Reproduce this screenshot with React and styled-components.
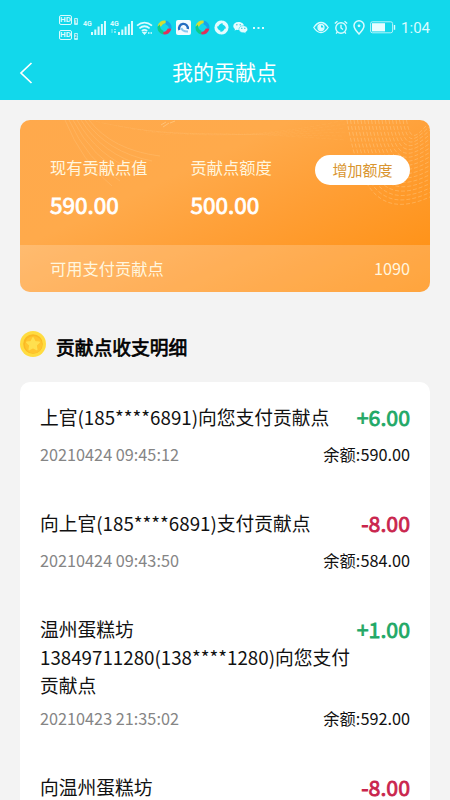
import React from "react";
import styled, { createGlobalStyle } from "styled-components";

const records = [
  {
    id: 1,
    title: "上官(185****6891)向您支付贡献点",
    amount: "+6.00",
    time: "20210424 09:45:12",
    balance: "590.00",
  },
  {
    id: 2,
    title: "向上官(185****6891)支付贡献点",
    amount: "-8.00",
    time: "20210424 09:43:50",
    balance: "584.00",
  },
  {
    id: 3,
    title: "温州蛋糕坊13849711280(138****1280)向您支付贡献点",
    amount: "+1.00",
    time: "20210423 21:35:02",
    balance: "592.00",
  },
  {
    id: 4,
    title: "向温州蛋糕坊",
    amount: "-8.00",
  },
];

const swirlColors = ["#d3de35", "#16a5ea", "#e0305a", "#0ccb8b"];
const plainColors = ["#e4fcff", "#e4fcff", "#e4fcff", "#e4fcff"];

const Signal = ({ sub }) => (
  <svg width="28" height="18" viewBox="0 0 28 18" fill="#d9fbff">
    <text x="0" y="7" fontSize="7" fontWeight="700">
      4G
    </text>
    {sub && <path d="M1.500 10h1v4h-1zM4 10h2v1H4zM4 12h2v2H4z" opacity=".6" />}
    <path d="M8 13h2v3H8zM11.300 10.500h2V16h-2zM14.600 7.500h2V16h-2zM17.900 5h2v11h-2zM21 2h2v14h-2z" />
  </svg>
);

const Wifi = () => (
  <svg width="17" height="14" viewBox="0 0 17 14" fill="none" stroke="#d9fbff">
    <path d="M1 4.600Q8.500-1.500 16 4.600M3.400 7.300Q8.500 3.200 13.600 7.300M5.800 9.900Q8.500 7.800 11.200 9.900" strokeWidth="1.700" />
    <path d="M7 11.300h3l-1.500 1.700zM12 12h1.500M14.500 12H16" strokeWidth="1.300" />
  </svg>
);

const Swirl = ({ colors }) => (
  <svg width="15" height="15" viewBox="0 0 15 15">
    {colors.map((color, i) => (
      <path
        key={i}
        d="M.6 6.200A7 7 0 0 1 8.300.5L10.400 3Q5.800 2.600 4.200 6.500z"
        fill={color}
        transform={`rotate(${i * 90} 7.500 7.500)`}
      />
    ))}
  </svg>
);

const Browser = () => (
  <svg width="15" height="15" viewBox="0 0 15 15">
    <rect width="15" height="15" rx="2" fill="#f5fbff" />
    <path d="M3.400 10A4.400 4.400 0 1 1 11.800 9" fill="none" stroke="#246dc1" strokeWidth="2.400" />
    <path d="M5.500 7.800Q6 11.600 12 11.400" fill="none" stroke="#8bc7ef" strokeWidth="2" />
  </svg>
);

const Wechat = () => (
  <svg width="15" height="13" viewBox="0 0 15 13">
    <path d="M5.500 1C2.300 1 .3 2.800.3 5c0 1.300.7 2.300 1.700 3l-.4 1.600 2-.9c3.800.8 7.300-.9 7.300-3.700C10.900 2.600 8.500 1 5.500 1z" fill="#e4fcff" />
    <path d="M10.300 4.700c-2.600 0-4.400 1.600-4.400 3.600 0 2.200 2.300 3.800 5.200 3.400l1.900.9-.4-1.400c1.300-.7 2.100-1.700 2.100-2.900 0-2-1.900-3.600-4.400-3.600z" fill="#e4fcff" stroke="#12d5ea" strokeWidth=".5" />
    <path d="M3.600 3.800h.5M7 3.800h.5M8.600 7.300h.4M11.600 7.300h.4" stroke="#12b8cc" strokeLinecap="round" />
  </svg>
);

const Eye = () => (
  <svg width="16" height="13" viewBox="0 0 16 13" fill="none" stroke="#d9fbff" strokeWidth="1.300">
    <path d="M.8 6.500Q4 1.500 8 1.500t7.200 5Q12 11.500 8 11.500T.8 6.500z" />
    <circle cx="8" cy="6.500" r="3" />
    <path d="M8 3.800v2.700h2.700A2.700 2.700 0 1 1 8 3.800z" fill="#d9fbff" stroke="none" />
  </svg>
);

const Alarm = () => (
  <svg width="14" height="15" viewBox="0 0 14 15" fill="none" stroke="#d9fbff" strokeWidth="1.400">
    <circle cx="7" cy="8" r="5.200" />
    <path d="M7 4.800V8l2 1.500M.8 3.500 3.500 1.200M13.200 3.500l-2.700-2.300M3.200 12l-1 1.600M10.800 12l1 1.600" />
  </svg>
);

const Pin = () => (
  <svg width="12" height="15" viewBox="0 0 12 15" fill="none" stroke="#d9fbff" strokeWidth="1.500">
    <path d="M6 14Q1 8.800 1 5.800a5 5 0 0 1 10 0Q11 8.800 6 14z" />
    <circle cx="6" cy="5.800" r="1.400" fill="#d9fbff" stroke="none" />
  </svg>
);

const Battery = () => (
  <svg width="26" height="13" viewBox="0 0 26 13">
    <rect x=".6" y=".8" width="22" height="11" rx="1.800" fill="none" stroke="#b5f5fb" />
    <rect x="2" y="2.200" width="13" height="8.200" fill="#e8fdff" />
    <path d="M24.500 4v4.800" stroke="#d9fbff" strokeWidth="1.400" />
  </svg>
);

const Coin = () => (
  <svg width="26" height="26" viewBox="0 0 26 26">
    <circle cx="13" cy="13" r="13" fill="#ffdc40" />
    <circle cx="13" cy="13" r="9.800" fill="#fab924" />
    <circle cx="13.500" cy="13.700" r="8.600" fill="#ffc52e" />
    <path
      d="m13 6.800 1.900 3.900 4.300.6-3.100 3 .7 4.300-3.800-2-3.800 2 .7-4.300-3.100-3 4.300-.6z"
      fill="#ffe04f"
      stroke="#ffe04f"
      strokeWidth="1.500"
      strokeLinejoin="round"
    />
  </svg>
);

const Waves = () => (
  <WaveLines viewBox="0 0 410 125" fill="none" stroke="#ffe0ae">
    {Array.from({ length: 7 }, (_, i) => (
      <path
        key={`l${i}`}
        d={`M${45 + i * 4} 0Q${62 + i * 5} ${42 - i * 2} ${92 + i * 8} ${66 - i * 5}`}
        strokeWidth=".7"
        opacity=".28"
      />
    ))}
    {Array.from({ length: 6 }, (_, i) => (
      <path
        key={`t${i}`}
        d={`M${70 + i * 14} ${i * 3}Q190 ${30 - i * 4} 325 ${i * 4}`}
        strokeWidth=".6"
        strokeDasharray="4 2"
        opacity=".12"
      />
    ))}
    {Array.from({ length: 18 }, (_, i) => (
      <path
        key={`r${i}`}
        d={`M${327 + i * 3.500} 0C${340 + i * 3} ${78 - i * 3} ${365 + i * 2} ${98 - i * 5} 412 ${76 - i * 4.500}`}
        strokeWidth=".8"
        strokeDasharray="4 2"
        opacity=".4"
      />
    ))}
    <path d="M141 5l5-3M143 7l6-4M150 3l5-2" opacity=".45" />
  </WaveLines>
);

export default function App() {
  return (
    <Page>
      <GlobalStyle />
      <Top>
        <StatusBar>
          <StatusLeft>
            <HdGroup>
              {[1, 2].map((n) => (
                <HdLine key={n}>
                  <HdBadge>HD</HdBadge>
                  <SimBadge>{n}</SimBadge>
                </HdLine>
              ))}
            </HdGroup>
            <Signals>
              <Signal />
              <Signal sub />
            </Signals>
            <StatusIcons $gap={4}>
              <Wifi />
              <Swirl colors={swirlColors} />
              <Browser />
              <Swirl colors={swirlColors} />
              <Swirl colors={plainColors} />
              <Wechat />
              <svg width="13" height="4" viewBox="0 0 13 4" fill="#d9fbff">
                <path d="M1 1h2v2H1zM5.500 1h2v2h-2zM10 1h2v2h-2z" />
              </svg>
            </StatusIcons>
          </StatusLeft>
          <StatusIcons $gap={5}>
            <Eye />
            <Alarm />
            <Pin />
            <Battery />
            <Clock>1:04</Clock>
          </StatusIcons>
        </StatusBar>
        <NavBar>
          <BackButton aria-label="返回">
            <svg width="14" height="22" viewBox="0 0 14 22" fill="none" stroke="#fff" strokeWidth="1.700">
              <path d="M12.500 1 2 11l10.500 10" />
            </svg>
          </BackButton>
          <NavTitle>我的贡献点</NavTitle>
        </NavBar>
      </Top>

      <PointsCard>
        <Waves />
        <PointsMain>
          <Stat>
            <StatLabel>现有贡献点值</StatLabel>
            <StatValue>590.00</StatValue>
          </Stat>
          <Stat>
            <StatLabel>贡献点额度</StatLabel>
            <StatValue>500.00</StatValue>
          </Stat>
          <AddButton>增加额度</AddButton>
        </PointsMain>
        <PointsFooter>
          <span>可用支付贡献点</span>
          <span>1090</span>
        </PointsFooter>
      </PointsCard>

      <SectionHeader>
        <Coin />
        <SectionTitle>贡献点收支明细</SectionTitle>
      </SectionHeader>

      <RecordList>
        {records.map((item) => (
          <Record key={item.id}>
            <RecordHead>
              <RecordTitle>{item.title}</RecordTitle>
              <Amount $income={item.amount.startsWith("+")}>{item.amount}</Amount>
            </RecordHead>
            {item.time && (
              <RecordFoot>
                <Time>{item.time}</Time>
                <span>余额:{item.balance}</span>
              </RecordFoot>
            )}
          </Record>
        ))}
      </RecordList>
    </Page>
  );
}

const GlobalStyle = createGlobalStyle`
  * {
    box-sizing: border-box;
  }

  body {
    margin: 0;
    background: #f3f3f3;
    font-family: "Noto Sans CJK SC", sans-serif;
  }
`;

const Page = styled.div`
  display: flex;
  flex-direction: column;
  width: 100%;
  height: 800px;
  overflow: hidden;
  background: #f3f3f3;
`;

const Top = styled.header`
  flex: none;
  height: 100px;
  background: #12d8eb;
  color: #fff;
`;

const StatusBar = styled.div`
  display: flex;
  justify-content: space-between;
  align-items: center;
  height: 45px;
  padding: 10px 20px 0 59px;
`;

const StatusLeft = styled.div`
  display: flex;
  align-items: center;
`;

const HdGroup = styled.div`
  display: flex;
  flex-direction: column;
  gap: 5px;
  width: 24px;
`;

const HdLine = styled.div`
  display: flex;
  align-items: flex-end;
  gap: 2px;
`;

const HdBadge = styled.span`
  width: 13px;
  height: 10px;
  border: 1px solid #d9fbff;
  border-radius: 2px;
  font: 700 8px/8px Roboto, sans-serif;
  text-align: center;
  color: #d9fbff;
`;

const SimBadge = styled.span`
  width: 4px;
  height: 7px;
  border-radius: 1px;
  background: #b9f6fc;
  font: 700 5px/7px Roboto, sans-serif;
  text-align: center;
  color: #12b8cc;
`;

const Signals = styled.div`
  display: flex;
  width: 53px;
  font-family: Roboto, sans-serif;

  svg {
    flex: none;
    margin-right: -1px;
  }
`;

const StatusIcons = styled.div`
  display: flex;
  align-items: center;
  gap: ${({ $gap }) => $gap}px;
`;

const Clock = styled.span`
  font: 400 15px/18px Roboto, sans-serif;
  color: #d9fbff;
`;

const NavBar = styled.div`
  display: grid;
  grid-template-columns: 54px 1fr 54px;
  align-items: center;
  height: 55px;
`;

const BackButton = styled.button`
  display: flex;
  padding: 0 0 0 19px;
  border: 0;
  background: none;
`;

const NavTitle = styled.h1`
  margin: 0 1px 3px 0;
  font-size: 21px;
  font-weight: 400;
  line-height: 30px;
  text-align: center;
`;

const PointsCard = styled.section`
  position: relative;
  display: flex;
  flex: none;
  flex-direction: column;
  height: 172px;
  margin: 20px 20px 0;
  border-radius: 10px;
  overflow: hidden;
  background: linear-gradient(155deg, #ffa94c 0%, #ffaa4b 35%, #ff9e34 60%, #ff8e0d 100%);
  color: #fff;
`;

const WaveLines = styled.svg`
  position: absolute;
  top: 0;
  left: 0;
  width: 410px;
  height: 125px;
`;

const PointsMain = styled.div`
  position: relative;
  display: flex;
  height: 125px;
  padding: 35px 20px 0 30px;
`;

const Stat = styled.div`
  flex: none;

  & + & {
    margin-left: 43px;
  }
`;

const StatLabel = styled.div`
  font-size: 16.25px;
  line-height: 24px;
  color: #fff6df;
`;

const StatValue = styled.div`
  margin-top: 9px;
  font-size: 22.5px;
  line-height: 32px;
  -webkit-text-stroke: 0.8px currentColor;
`;

const AddButton = styled.button`
  flex: none;
  width: 95px;
  height: 30px;
  margin-left: auto;
  padding: 0;
  border: 0;
  border-radius: 15px;
  background: #fff;
  font-family: inherit;
  font-size: 15px;
  line-height: 30px;
  color: #d9952f;
`;

const PointsFooter = styled.div`
  position: relative;
  display: flex;
  flex: 1;
  justify-content: space-between;
  align-items: center;
  padding: 0 20px 1px 30px;
  background: rgba(255, 255, 255, 0.2);
  font-size: 16.25px;
  line-height: 24px;
  color: #fff6df;
`;

const SectionHeader = styled.div`
  display: flex;
  flex: none;
  height: 90px;
  padding: 39px 20px 0;
  gap: 10px;
`;

const SectionTitle = styled.h2`
  margin: 2px 0 0;
  font-size: 18.75px;
  font-weight: 400;
  line-height: 28px;
  color: #000;
  -webkit-text-stroke: 0.7px currentColor;
`;

const RecordList = styled.section`
  flex: 1;
  margin: 0 20px;
  padding: 21px 20px 0;
  border-radius: 10px 10px 0 0;
  background: #fff;
`;

const Record = styled.article`
  padding-bottom: 43px;

  &:last-child {
    padding-bottom: 0;
  }
`;

const RecordHead = styled.div`
  display: flex;
  justify-content: space-between;
  align-items: flex-start;
  min-height: 32px;
`;

const RecordTitle = styled.div`
  width: 312px;
  font-size: 18.75px;
  line-height: 28px;
  color: #111;
`;

const Amount = styled.div`
  font-size: 21.3px;
  line-height: 28px;
  color: ${({ $income }) => ($income ? "#20a866" : "#c9244c")};
  -webkit-text-stroke: 0.8px currentColor;
`;

const RecordFoot = styled.div`
  display: flex;
  justify-content: space-between;
  margin-top: 7px;
  font-size: 16.25px;
  line-height: 24px;
  color: #111;
`;

const Time = styled.span`
  color: #858585;
`;
